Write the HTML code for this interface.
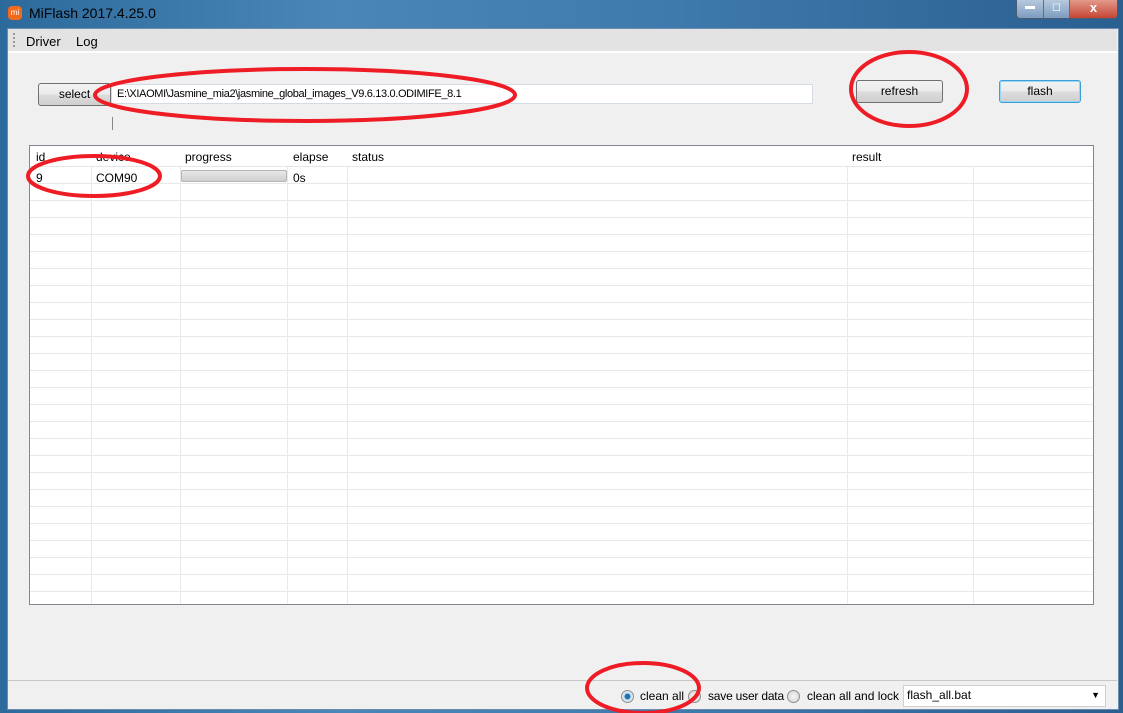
<!DOCTYPE html><html><head><style>
body{margin:0;width:1123px;height:713px;overflow:hidden;font-family:"Liberation Sans",sans-serif;font-size:12px;background:linear-gradient(90deg,#2d6a9c,#4a86b8 30%,#3f7aad 60%,#2a5f90);position:relative}
.abs{position:absolute}
.btn{position:absolute;border:1px solid #707070;border-radius:3px;background:linear-gradient(#f2f2f2,#ebebeb 50%,#dddddd 51%,#cfcfcf);text-align:center;line-height:20px;font-size:12px;color:#000}
.grid{position:absolute;left:29px;top:145px;width:1063px;height:458px;border:1px solid #828790;background:#fff;
background-image:linear-gradient(#e8e8e8 1px,transparent 1px);background-size:100% 17px;background-position:0 20px}
.col{position:absolute;top:0;bottom:0;width:1px;background:#eaeaea}
.hd{position:absolute;top:0;left:0;right:0;height:20px;background:#fff;border-bottom:1px solid #e5e5e5}
.hd span,.r span{position:absolute;top:4px}
.radio{position:absolute;width:11px;height:11px;border-radius:50%;border:1px solid #8e8f8f;background:radial-gradient(#f4f4f4,#d4d4d4)}
</style></head><body>
<div class="abs" style="left:8px;top:6px;width:14px;height:14px;border-radius:4px;background:#f26b1d;color:#fff;font-size:8px;text-align:center;line-height:14px">mi</div>
<div class="abs" style="left:29px;top:5px;font-size:14px;color:#000">MiFlash 2017.4.25.0</div>
<div class="abs" style="left:1016px;top:0;width:100px;height:18px;border:1px solid #4a5c72;border-top:none;border-radius:0 0 4px 4px;background:linear-gradient(#b6c9dd,#7d9cc0);overflow:hidden">
<div class="abs" style="left:0;top:0;width:26px;height:18px;border-right:1px solid #5a6f88;color:#fff;text-align:center;font-size:10px;line-height:14px">▬</div>
<div class="abs" style="left:27px;top:0;width:25px;height:18px;border-right:1px solid #5a6f88;color:#fff;text-align:center;font-size:11px">◻</div>
<div class="abs" style="left:53px;top:0;width:47px;height:18px;background:linear-gradient(#e39a8a,#c64535);color:#fff;text-align:center;font-weight:bold;font-size:13px">x</div></div>
<div class="abs" style="left:7px;top:28px;width:1110px;height:680px;background:#f0f0f0;border:1px solid #6d8bb0"></div>
<div class="abs" style="left:8px;top:29px;width:1109px;height:22px;background:#e3e3e3;border-bottom:2px solid #fff"></div>
<div class="abs" style="left:13px;top:33px;width:2px;height:14px;border-left:2px dotted #9a9a9a"></div>
<div class="abs" style="left:26px;top:34px;font-size:13px">Driver</div>
<div class="abs" style="left:76px;top:34px;font-size:13px">Log</div>
<div class="btn" style="left:38px;top:83px;width:71px;height:21px">select</div>
<div class="abs" style="left:111px;top:84px;width:695px;height:18px;background:#fff;border:1px solid #d5dbe2;font-size:11px;letter-spacing:-0.35px;line-height:18px;padding-left:5px">E:\XIAOMI\Jasmine_mia2\jasmine_global_images_V9.6.13.0.ODIMIFE_8.1</div>
<div class="abs" style="left:112px;top:117px;width:1px;height:13px;background:#888"></div>
<div class="btn" style="left:856px;top:80px;width:85px;height:21px">refresh</div>
<div class="btn" style="left:999px;top:80px;width:80px;height:21px;border-color:#3c9fd9;box-shadow:inset 0 0 0 1px #9ad6f5">flash</div>
<div class="grid">
<div class="col" style="left:61px"></div><div class="col" style="left:150px"></div><div class="col" style="left:257px"></div><div class="col" style="left:317px"></div><div class="col" style="left:817px"></div><div class="col" style="left:943px"></div>
<div class="hd"><span style="left:6px">id</span><span style="left:66px">device</span><span style="left:155px">progress</span><span style="left:263px">elapse</span><span style="left:322px">status</span><span style="left:822px">result</span></div>
<div class="abs r" style="left:0;top:21px;width:100%;height:17px"><span style="left:6px">9</span><span style="left:66px">COM90</span><span style="left:263px">0s</span>
<div class="abs" style="left:151px;top:3px;width:104px;height:10px;border:1px solid #b5b5b5;border-radius:2px;background:linear-gradient(#e8e8e8,#cfcfcf)"></div></div>
</div>
<div class="abs" style="left:8px;top:680px;width:1109px;height:1px;background:#c8c8c8"></div>
<div class="radio" style="left:621px;top:690px;background:radial-gradient(#1e6fae 30%,#cfe4f3 45%,#e8e8e8)"></div>
<div class="abs" style="left:640px;top:689px;font-size:12px">clean all</div>
<div class="radio" style="left:688px;top:690px"></div>
<div class="abs" style="left:708px;top:689px;letter-spacing:-0.2px">save user data</div>
<div class="radio" style="left:787px;top:690px"></div>
<div class="abs" style="left:807px;top:689px">clean all and lock</div>
<div class="abs" style="left:903px;top:685px;width:198px;height:20px;background:#fff;border:1px solid #cfcfcf;line-height:18px;padding-left:3px">flash_all.bat<span style="position:absolute;right:5px;top:0;font-size:9px">▼</span></div>
<svg class="abs" style="left:0;top:0" width="1123" height="713"><g fill="none" stroke="#ee1c24" stroke-width="4">
<ellipse cx="305" cy="95" rx="210" ry="26"/><ellipse cx="909" cy="89" rx="58" ry="37"/><ellipse cx="94" cy="176" rx="66" ry="20"/><ellipse cx="643" cy="688" rx="56" ry="25"/></g></svg>
</body></html>
